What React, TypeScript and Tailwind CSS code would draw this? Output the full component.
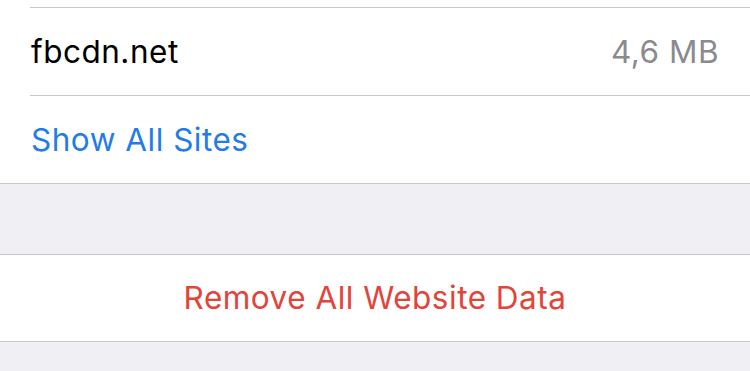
const font = { fontFamily: "Inter, 'Liberation Sans', sans-serif" };

const Row = ({
  children,
  inset = true,
}: {
  children: React.ReactNode;
  inset?: boolean;
}) => (
  <div className="flex flex-col">
    <div className="flex h-[87px] items-center pl-[31px] pr-[31px]">{children}</div>
    <div className={inset ? "ml-[30px] h-px bg-[#c8c7cc]" : "h-px bg-[#c8c7cc]"} />
  </div>
);

export default function App() {
  return (
    <div className="flex h-[371px] w-[750px] flex-col overflow-hidden bg-[#efeff4]" style={font}>
      <div className="flex flex-col bg-white">
        <div className="h-[7px]" />
        <div className="ml-[30px] h-px bg-[#c8c7cc]" />
        <Row>
          <span className="flex-1 text-[31.5px] tracking-[0.5px] text-black">fbcdn.net</span>
          <span className="text-[31.5px] tracking-[0.5px] text-[#8a8a8f]">4,6 MB</span>
        </Row>
        <Row inset={false}>
          <span className="text-[31.5px] tracking-[0.5px] text-[#1f7ce8]">Show All Sites</span>
        </Row>
      </div>
      <div className="h-[70px]" />
      <div className="h-px bg-[#c8c7cc]" />
      <div className="flex h-[86px] items-center justify-center bg-white">
        <span className="text-[31.5px] tracking-[0.5px] text-[#e3443a]">Remove All Website Data</span>
      </div>
      <div className="h-px bg-[#c8c7cc]" />
    </div>
  );
}
